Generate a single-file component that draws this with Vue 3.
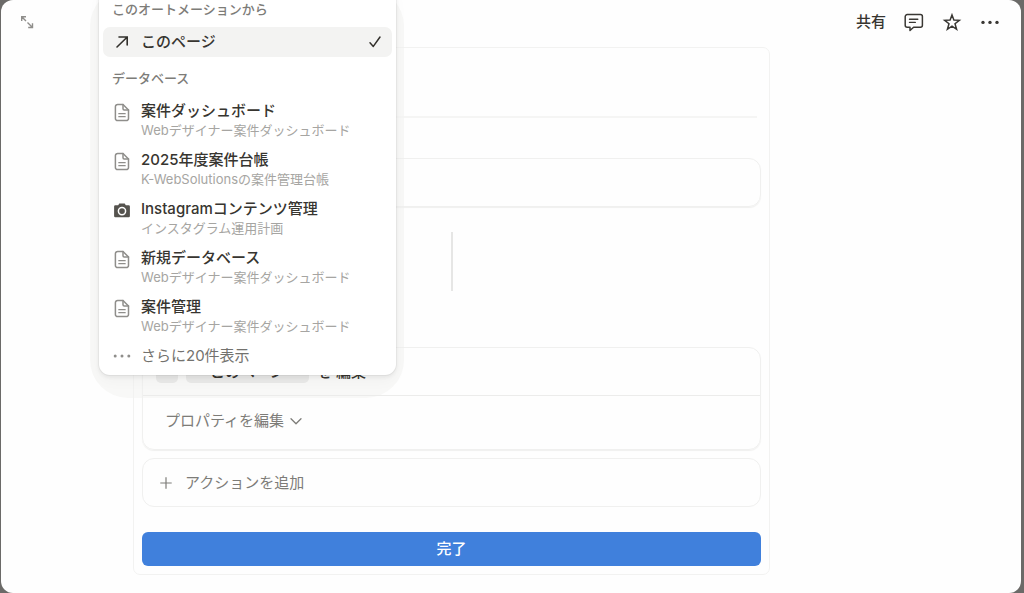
<script setup>
const databases = [
  { title: '案件ダッシュボード', note: 'Webデザイナー案件ダッシュボード', icon: 'page' },
  { title: '2025年度案件台帳', note: 'K-WebSolutionsの案件管理台帳', icon: 'page' },
  { title: 'Instagramコンテンツ管理', note: 'インスタグラム運用計画', icon: 'camera' },
  { title: '新規データベース', note: 'Webデザイナー案件ダッシュボード', icon: 'page' },
  { title: '案件管理', note: 'Webデザイナー案件ダッシュボード', icon: 'page' },
]
</script>

<template>
  <div class="backdrop">
    <div class="window">
      <header class="topbar">
        <button class="icon-btn expand" aria-label="全画面で開く">
          <svg width="14" height="14" viewBox="0 0 14 14" fill="none" stroke="#8f8e8b" stroke-width="1.4">
            <path d="M1.700 6V1.700H6M1.700 1.700L6 6M12.500 8.200V12.500H8.200M12.500 12.500L7.500 7.500" />
          </svg>
        </button>
        <nav class="actions">
          <button class="share">共有</button>
          <button class="icon-btn" aria-label="コメント">
            <svg width="20" height="20" viewBox="0 0 20 20" fill="none" stroke="#3a3834" stroke-width="1.500" stroke-linejoin="round" stroke-linecap="round">
              <path d="M3.200 2.600H16.400A2 2 0 0 1 18.400 4.600V13.200A2 2 0 0 1 16.400 15.200H9.600L6 18.500V15.200H3.200A2 2 0 0 1 1.200 13.200V4.600A2 2 0 0 1 3.200 2.600Z" />
              <path d="M5.500 7.200H13.800M5.500 10.400H11.300" stroke-width="1.400" />
            </svg>
          </button>
          <button class="icon-btn" aria-label="お気に入り">
            <svg width="20" height="20" viewBox="0 0 20 20" fill="none" stroke="#3a3834" stroke-width="1.500" stroke-linejoin="miter">
              <path d="M10 3L11.900 8.100L17.300 8.300L13 11.700L14.600 17.300L10 14.200L5.400 17.300L7 11.700L2.700 8.300L8.100 8.100Z" />
            </svg>
          </button>
          <button class="icon-btn" aria-label="その他">
            <svg width="20" height="20" viewBox="0 0 20 20" fill="#3a3834">
              <circle cx="3" cy="10.400" r="1.700" /><circle cx="10" cy="10.400" r="1.700" /><circle cx="17" cy="10.400" r="1.700" />
            </svg>
          </button>
        </nav>
      </header>

      <main class="panel">
        <div class="panel-head"></div>
        <section class="box trigger"></section>
        <div class="connector"></div>
        <section class="box action">
          <div class="action-head">
            <span class="chip chip-icon"></span>
            <button class="chip chip-target">このページ</button>
            <span class="particle">を</span>
            <span>編集</span>
          </div>
          <button class="property">
            プロパティを編集
            <svg width="12" height="12" viewBox="0 0 12 12" fill="none" stroke="#7d7c78" stroke-width="1.300" stroke-linecap="round" stroke-linejoin="round">
              <path d="M1 3.700L6 8.700L11 3.700" />
            </svg>
          </button>
        </section>
        <button class="box add">
          <svg width="12" height="12" viewBox="0 0 12 12" stroke="#7d7c78" stroke-width="1.200">
            <path d="M6 0.300V11.700M0.300 6H11.700" />
          </svg>
          アクションを追加
        </button>
        <button class="done">完了</button>
      </main>

      <div class="menu" role="menu">
        <h3 class="caption">このオートメーションから</h3>
        <button class="item selected" role="menuitem">
          <span class="glyph">
            <svg width="14" height="14" viewBox="0 0 14 14" fill="none" stroke="#32302c" stroke-width="1.600" stroke-linecap="round">
              <path d="M2 12L12 2.200M4 2H12.200V10" />
            </svg>
          </span>
          <span class="label">このページ</span>
          <svg class="check" width="14" height="14" viewBox="0 0 14 14" fill="none" stroke="#32302c" stroke-width="1.500" stroke-linecap="round" stroke-linejoin="round">
            <path d="M2 7.800L5.300 11.400L12 2" />
          </svg>
        </button>
        <h3 class="caption second">データベース</h3>
        <button v-for="db in databases" :key="db.title" class="item db" role="menuitem">
          <span class="glyph">
            <svg v-if="db.icon === 'page'" width="16" height="20" viewBox="0 0 16 20" fill="none" stroke="#8f8e8b" stroke-width="1.500" stroke-linejoin="round" stroke-linecap="round">
              <path d="M3.600 1.500H9L14.500 7V15.400A2.200 2.200 0 0 1 12.300 17.600H3.600A2.200 2.200 0 0 1 1.400 15.400V3.700A2.200 2.200 0 0 1 3.600 1.500Z" />
              <path d="M9 1.500V5.800A1.200 1.200 0 0 0 10.200 7H14.500" />
              <path d="M4.800 10.700H11.200M4.800 13.700H11.200" stroke-width="1.200" />
            </svg>
            <svg v-else width="16" height="20" viewBox="0 0 16 20">
              <path fill="#55534e" d="M1.300 4.200H4.200L5.300 2.400H10.700L11.800 4.200H14.700A1.200 1.200 0 0 1 15.900 5.400V15A1.200 1.200 0 0 1 14.700 16.200H1.300A1.200 1.200 0 0 1 0.100 15V5.400A1.200 1.200 0 0 1 1.300 4.200Z" />
              <circle cx="8" cy="10.100" r="3.600" fill="#55534e" stroke="#fff" stroke-width="1.500" />
            </svg>
          </span>
          <span class="texts">
            <span class="title">{{ db.title }}</span>
            <span class="note">{{ db.note }}</span>
          </span>
        </button>
        <button class="item more" role="menuitem">
          <span class="glyph">
            <svg width="18" height="6" viewBox="0 0 18 6" fill="#8f8e8b">
              <circle cx="2.200" cy="3" r="1.500" /><circle cx="9" cy="3" r="1.500" /><circle cx="15.800" cy="3" r="1.500" />
            </svg>
          </span>
          <span class="label">さらに20件表示</span>
        </button>
      </div>
    </div>
  </div>
</template>

<style>
body {
  background: #6b6a68;
}
</style>

<style scoped>
.backdrop,
.backdrop * {
  box-sizing: border-box;
}
.backdrop {
  height: 100vh;
  padding: 0 3px 0 1px;
  background: #6b6a68;
  font-family: Inter, 'Noto Sans CJK JP', sans-serif;
  font-size: 15px;
  line-height: 20px;
  color: #373530;
}
button {
  margin: 0;
  padding: 0;
  border: 0;
  background: none;
  color: inherit;
  font: inherit;
  text-align: left;
  cursor: pointer;
}
svg {
  display: block;
  flex: none;
}
.window {
  position: relative;
  isolation: isolate;
  height: 100%;
  overflow: hidden;
  border-radius: 12px;
  background: #fefefe;
}
.topbar {
  display: flex;
  align-items: center;
  justify-content: space-between;
  height: 44px;
  padding: 0 21px 0 19px;
}
.actions {
  display: flex;
  align-items: center;
  gap: 18px;
}
.share {
  font-weight: 500;
}
.panel {
  display: flex;
  flex-direction: column;
  margin: 3px 251px 0 132px;
  padding: 0 8px 8px;
  border: 1px solid #f2f2f1;
  border-radius: 7px;
}
.panel-head {
  height: 70px;
  margin: 0 4px 40px;
  border-bottom: 2px solid #f5f5f4;
}
.box {
  border: 1px solid #f0f0ef;
  border-radius: 12px;
}
.trigger {
  height: 49px;
  box-shadow: 0 1px 1px #f0f0ef;
}
.connector {
  width: 2px;
  height: 59px;
  margin: 25px auto 56px;
  background: #e6e6e5;
}
.action {
  box-shadow: 0 1px 1px #f0f0ef;
}
.action-head {
  display: flex;
  align-items: center;
  height: 48px;
  padding: 0 13px;
  border-bottom: 1px solid #ececeb;
  font-weight: 500;
}
.chip {
  height: 22px;
  border-radius: 5px;
  background: #e9e9e8;
}
.chip-icon {
  width: 22px;
  margin-right: 8px;
}
.chip-target {
  width: 123px;
  margin-right: 8px;
  padding-left: 24px;
}
.particle {
  margin-right: 4px;
}
.property {
  display: flex;
  align-items: center;
  gap: 6px;
  height: 53px;
  padding: 0 22px 4px;
  color: #7d7c78;
}
.add {
  display: flex;
  align-items: center;
  gap: 13px;
  height: 49px;
  margin-top: 8px;
  padding: 0 17px;
  color: #7d7c78;
}
.done {
  height: 34px;
  margin-top: 25px;
  border-radius: 6px;
  background: #4080dc;
  color: #fff;
  font-weight: 500;
  text-align: center;
}
.menu {
  position: absolute;
  top: -12px;
  left: 98px;
  width: 297px;
  padding: 8px 4px 4px;
  border-radius: 11px;
  background: #fff;
  box-shadow:
    0 0 0 1px rgba(25, 25, 25, 0.04),
    0 2px 4px rgba(25, 25, 25, 0.07),
    0 6px 14px rgba(25, 25, 25, 0.03);
}
/* wide, soft-edged halo under the menu */
.menu::before {
  content: '';
  position: absolute;
  z-index: -1;
  inset: 0 -8px -23px -9px;
  border-radius: 38px;
  background: #f8f8f7;
}
.caption {
  margin: 0 0 4px;
  padding-left: 9px;
  color: #7d7c78;
  font-size: 13px;
  font-weight: 500;
  line-height: 27px;
}
.second {
  margin-top: 8px;
}
.item {
  display: flex;
  align-items: center;
  width: 100%;
  height: 30px;
  padding: 0 10px;
  border-radius: 7px;
}
.glyph {
  display: flex;
  justify-content: center;
  width: 18px;
  margin-right: 10px;
}
.selected {
  background: #f3f3f2;
  font-weight: 500;
}
.check {
  margin-left: auto;
}
.db {
  align-items: flex-start;
  height: 49px;
  padding-top: 5px;
}
.db .glyph {
  padding-top: 2px;
}
.texts {
  display: flex;
  flex-direction: column;
}
.title {
  font-weight: 500;
}
.note {
  color: #a6a5a2;
  font-size: 13px;
  line-height: 18px;
}
.more {
  color: #73726e;
}
</style>
